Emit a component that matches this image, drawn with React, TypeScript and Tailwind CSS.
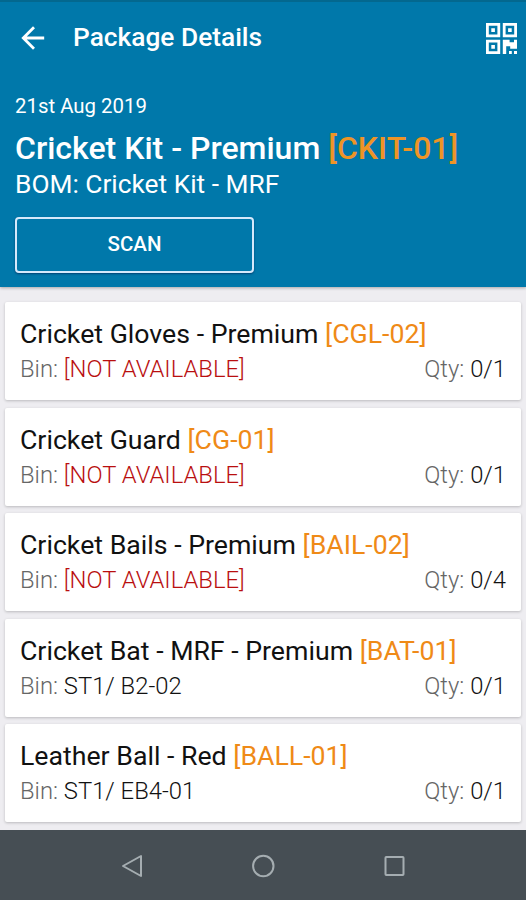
type PackageItem = {
  name: string;
  code: string;
  bin: string | null;
  picked: number;
  total: number;
};

const ITEMS: PackageItem[] = [
  { name: "Cricket Gloves - Premium", code: "CGL-02", bin: null, picked: 0, total: 1 },
  { name: "Cricket Guard", code: "CG-01", bin: null, picked: 0, total: 1 },
  { name: "Cricket Bails - Premium", code: "BAIL-02", bin: null, picked: 0, total: 4 },
  { name: "Cricket Bat - MRF - Premium", code: "BAT-01", bin: "ST1/ B2-02", picked: 0, total: 1 },
  { name: "Leather Ball - Red", code: "BALL-01", bin: "ST1/ EB4-01", picked: 0, total: 1 },
];

/** Three finder squares plus the data block in the lower right corner. */
function QrIcon() {
  return (
    <svg viewBox="0 0 31 31" className="block size-[31px]" fill="none" stroke="currentColor" strokeWidth="2.8">
      <path d="M1.4 1.4h11.4v11.4H1.4ZM18.2 1.4h11.4v11.4H18.2ZM1.4 18.2h11.4v11.4H1.4Z" />
      <path
        fill="currentColor"
        stroke="none"
        d="M5.3 5.3h3.6v3.6H5.3ZM22.1 5.3h3.6v3.6H22.1ZM5.3 22.1h3.6v3.6H5.3ZM16.8 16.8h6.8v2.4H28v-2.4h3v9h-6.8v-2.6h-4V31h-3.4ZM23 28h2.8v3H23ZM28 28h3v3h-3Z"
      />
    </svg>
  );
}

function Header() {
  return (
    <header className="z-10 flex h-[287px] shrink-0 flex-col border-t-2 border-[#03688f] bg-[#0078aa] text-white shadow-[0_1px_3px_rgba(0,0,0,0.3)]">
      <div className="flex h-[71px] items-center pr-[9px] pl-[21px]">
        <button aria-label="Back">
          <svg viewBox="0 0 24 24" className="block size-6" fill="none" stroke="currentColor" strokeWidth="2.8">
            <path d="M23.2 12H2.5M13 1.3 2.3 12 13 22.7" />
          </svg>
        </button>
        <h1 className="ml-[28px] pb-px text-[26.3px] leading-8 font-medium">Package Details</h1>
        <button aria-label="Scan QR code" className="mt-[2px] ml-auto">
          <QrIcon />
        </button>
      </div>
      <div className="flex flex-col px-[15px] pt-[19px]">
        <p className="text-[20.4px] leading-[28px]">21st Aug 2019</p>
        <h2 className="mt-[8px] text-[32px] leading-[40px] font-medium whitespace-nowrap">
          Cricket Kit - Premium <span className="text-[#ee9426]">[CKIT-01]</span>
        </h2>
        <p className="text-[26.3px] leading-[32px]">BOM: Cricket Kit - MRF</p>
        <button className="mt-[17px] h-[56px] w-[239px] rounded-[4px] border-2 border-[#d5e9fb] bg-[#0078aa] pb-px text-[20.5px] font-medium shadow-[0_1px_2px_rgba(0,30,80,0.6)]">
          SCAN
        </button>
      </div>
    </header>
  );
}

function ItemCard({ item }: { item: PackageItem }) {
  return (
    <li className="h-[98px] shrink-0 rounded-[2px] bg-white px-[15px] pt-[15px] shadow-[0_1px_3px_rgba(0,0,0,0.22)]">
      <p className="text-[26.7px] leading-[34px] whitespace-nowrap text-[#111]">
        {item.name} <span className="text-[#ef8a17]">[{item.code}]</span>
      </p>
      <div className="flex justify-between text-[23.8px] leading-[37px] font-light text-[#111]">
        <p>
          <span className="text-[#666]">Bin:</span>{" "}
          {item.bin ?? <span className="text-[#b90f0f]">[NOT AVAILABLE]</span>}
        </p>
        <p>
          <span className="text-[#666]">Qty:</span> {item.picked}/{item.total}
        </p>
      </div>
    </li>
  );
}

function NavBar() {
  return (
    <nav className="z-10 grid h-[70px] shrink-0 grid-cols-3 place-items-center bg-[#464e54] px-[66px] pt-px text-[#a5adb1]">
      <svg viewBox="0 0 24 24" className="size-6" fill="none" stroke="currentColor" strokeWidth="2">
        <path d="M21 2v20L3 12Z" strokeLinejoin="round" />
      </svg>
      <svg viewBox="0 0 24 24" className="size-6" fill="none" stroke="currentColor" strokeWidth="2">
        <circle cx="12.3" cy="12" r="10.2" />
      </svg>
      <svg viewBox="0 0 24 24" className="size-6" fill="none" stroke="currentColor" strokeWidth="2">
        <rect x="3.5" y="3" width="18" height="18" rx="0.7" />
      </svg>
    </nav>
  );
}

export default function App() {
  return (
    <div className="flex h-[900px] w-[526px] flex-col overflow-hidden bg-[#eeedf1] font-['Roboto',sans-serif]">
      <Header />
      <ul className="flex min-h-0 flex-1 flex-col gap-[7.6px] px-[5px] pt-[15px]">
        {ITEMS.map((item) => (
          <ItemCard key={item.code} item={item} />
        ))}
      </ul>
      <NavBar />
    </div>
  );
}
